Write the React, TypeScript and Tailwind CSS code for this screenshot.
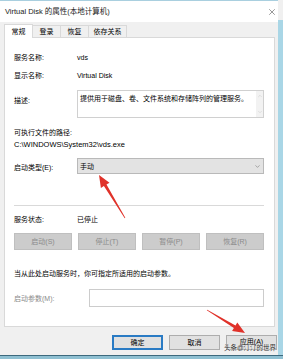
import React from "react";
import { X, ChevronDown, ChevronUp } from "lucide-react";

const font = "font-['Liberation_Sans','Noto_Sans_CJK_SC',sans-serif]";

const serviceButtons = ["启动(S)", "停止(T)", "暂停(P)", "恢复(R)"];
const tabs = ["登录", "恢复", "依存关系"];

function Row({ label, children }: { label: string; children: React.ReactNode }) {
  return (
    <div className="flex items-center h-[12px]">
      <div className="w-[63px] shrink-0">{label}</div>
      <div>{children}</div>
    </div>
  );
}

export default function App() {
  return (
    <div className={`relative w-[283px] h-[359px] overflow-hidden bg-[#f0f0f0] text-[7px] leading-none text-black ${font}`}>
      <div className="flex h-[355px]">
        <div className="w-[278px] flex flex-col">
          {/* title bar */}
          <div className="h-[22px] bg-white border-t border-[#a9cfdf] flex items-center justify-between pl-[5px] pr-[1px]">
            <span className="text-[7.5px] text-[#222]">Virtual Disk 的属性(本地计算机)</span>
            <X size={10} strokeWidth={1.2} className="text-[#333]" />
          </div>

          {/* tabs */}
          <div className="pl-[4px] pr-[3px] mt-[1px] flex items-end h-[14px]">
            <div className="h-[14px] w-[29px] bg-white border border-b-0 border-[#d9d9d9] flex items-center justify-center relative z-10 -mb-px">
              常规
            </div>
            {tabs.map((t, i) => (
              <div
                key={t}
                className={`h-[12px] border-t border-r border-[#d9d9d9] bg-[#f0f0f0] flex items-center justify-center ${i === 2 ? "w-[38px]" : "w-[28px]"}`}
              >
                {t}
              </div>
            ))}
          </div>

          {/* panel */}
          <div className="ml-[4px] mr-[3px] h-[290px] bg-white border border-[#d9d9d9] pl-[9px] pr-[10px] flex flex-col">
            <div className="mt-[13px]">
              <Row label="服务名称:">vds</Row>
            </div>
            <div className="mt-[6px]">
              <Row label="显示名称:">Virtual Disk</Row>
            </div>
            <div className="mt-[9px] flex">
              <div className="w-[63px] shrink-0 pt-[7px]">描述:</div>
              <div className="flex-1 h-[28px] border border-[#d0d0d0] flex">
                <div className="flex-1 pl-[2px] pt-[4px]">提供用于磁盘、卷、文件系统和存储阵列的管理服务。</div>
                <div className="w-[7px] bg-[#f2f2f2] flex flex-col justify-between items-center py-[2px]">
                  <ChevronUp size={6} strokeWidth={1.5} className="text-[#bbb]" />
                  <ChevronDown size={6} strokeWidth={1.5} className="text-[#bbb]" />
                </div>
              </div>
            </div>
            <div className="mt-[8px] h-[12px] flex items-center">可执行文件的路径:</div>
            <div className="mt-[1px] h-[12px] flex items-center text-[7.5px]">C:\WINDOWS\System32\vds.exe</div>
            <div className="mt-[7px] flex items-center">
              <div className="w-[63px] shrink-0 pt-[2px]">启动类型(E):</div>
              <div className="flex-1 h-[16px] bg-[#e3e3e3] border border-[#b9b9b9] flex items-center justify-between pl-[2px] pr-[2px]">
                <span>手动</span>
                <ChevronDown size={7} strokeWidth={1.5} className="text-[#555]" />
              </div>
            </div>
            <div className="mt-[31px] h-px bg-[#d9d9d9]" />
            <div className="mt-[7px]">
              <Row label="服务状态:">已停止</Row>
            </div>
            <div className="mt-[8px] flex justify-between">
              {serviceButtons.map((b) => (
                <div
                  key={b}
                  className="w-[58px] h-[17px] bg-[#cccccc] border border-[#bfbfbf] text-[#8a8a8a] flex items-center justify-center"
                >
                  {b}
                </div>
              ))}
            </div>
            <div className="mt-[17px] h-[12px] flex items-center">当从此处启动服务时，你可指定所适用的启动参数。</div>
            <div className="mt-[10px] flex items-center">
              <div className="w-[75px] shrink-0 text-[#8a8a8a]">启动参数(M):</div>
              <div className="flex-1 h-[18px] bg-white border border-[#cccccc]" />
            </div>
          </div>

          {/* bottom buttons */}
          <div className="mt-[8px] flex justify-end gap-[6px] pr-[1px]">
            <div className="w-[51px] h-[15px] bg-[#e1e1e1] border-2 border-[#2a7bc4] flex items-center justify-center">确定</div>
            <div className="w-[51px] h-[15px] bg-[#e1e1e1] border border-[#adadad] flex items-center justify-center">取消</div>
            <div className="w-[51px] h-[15px] bg-[#e1e1e1] border border-[#adadad] flex items-start justify-center pt-[2px]">应用(A)</div>
          </div>
        </div>
        <div className="w-[5px] mt-[20px] bg-[#a9d6e6]" />
      </div>
      <div className="h-[4px] border-t border-[#3d6a7e] bg-[#8fc0d2]" />

      {/* annotations */}
      <svg className="absolute inset-0 pointer-events-none" width="283" height="359">
        <polygon
          fill="#e0322a"
          points="99,175 109.5,182.7 106.5,184.5 125.3,217.8 124.7,218.2 103.9,186.1 100.9,187.9"
        />
        <polygon
          fill="#e0322a"
          points="245,333 237.3,322.5 235.5,325.5 207.2,309.7 206.8,310.3 233.9,328.1 232.1,331.1"
        />
      </svg>
      <div className="absolute left-[224px] top-[345px] text-[6.5px] text-[#333] [text-shadow:0_0_2px_#fff]">头条@汀汀的世界</div>
    </div>
  );
}
